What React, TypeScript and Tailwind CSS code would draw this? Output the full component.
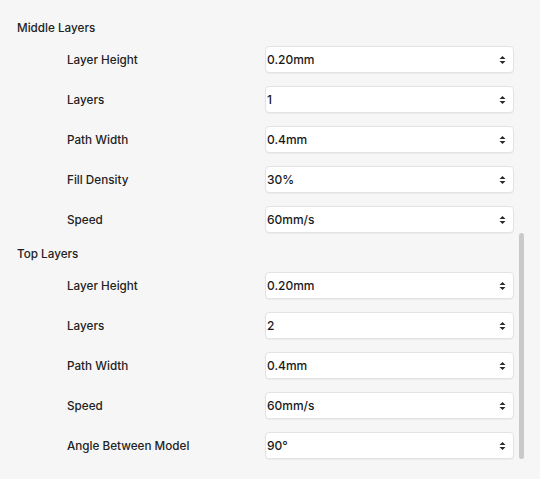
import React from "react"

type Row = { label: string; value: string }

const middle: Row[] = [
  { label: "Layer Height", value: "0.20mm" },
  { label: "Layers", value: "1" },
  { label: "Path Width", value: "0.4mm" },
  { label: "Fill Density", value: "30%" },
  { label: "Speed", value: "60mm/s" },
]

const top: Row[] = [
  { label: "Layer Height", value: "0.20mm" },
  { label: "Layers", value: "2" },
  { label: "Path Width", value: "0.4mm" },
  { label: "Speed", value: "60mm/s" },
  { label: "Angle Between Model", value: "90°" },
]

const Arrows = () => (
  <svg width="7" height="10" viewBox="0 0 7 10" className="shrink-0">
    <path d="M3.5 1 L6.5 4 H0.5 Z" fill="#2b2b2b" />
    <path d="M3.5 9 L6.5 6 H0.5 Z" fill="#2b2b2b" />
  </svg>
)

const SettingRow = ({ label, value }: Row) => (
  <div className="flex items-center h-[27px]">
    <div className="w-[248px] pl-[50px] pt-[3px] text-[11.7px] font-medium text-[#222]">{label}</div>
    <div className="w-[249px] h-[27px] flex items-center justify-between bg-white border border-[#e3e3e3] rounded-[4px] shadow-[0_1px_1px_rgba(0,0,0,0.04)] pl-[1px] pr-[7px]">
      <span className="text-[12px] font-medium text-[#1a1a1a]">{value}</span>
      <Arrows />
    </div>
  </div>
)

const Section = ({ title, rows }: { title: string; rows: Row[] }) => (
  <div className="flex flex-col gap-[9px]">
    <div className="h-5 leading-5 pt-px text-[11.7px] font-medium text-[#222]">{title}</div>
    <div className="flex flex-col gap-[13px]">
      {rows.map((r) => (
        <SettingRow key={r.label} {...r} />
      ))}
    </div>
  </div>
)

export default function App() {
  return (
    <div
      className="relative w-[540px] h-[479px] bg-[#f6f6f6] overflow-hidden pl-[17px] pt-[17px]"
      style={{ fontFamily: 'Inter, "Open Sans", sans-serif' }}
    >
      <div className="flex flex-col gap-[10px]">
        <Section title="Middle Layers" rows={middle} />
        <Section title="Top Layers" rows={top} />
      </div>
      {/* scrollbar */}
      <div className="absolute left-[519px] top-[233px] w-[5px] h-[226px] rounded-full bg-[#c9c9c9]" />
    </div>
  )
}
